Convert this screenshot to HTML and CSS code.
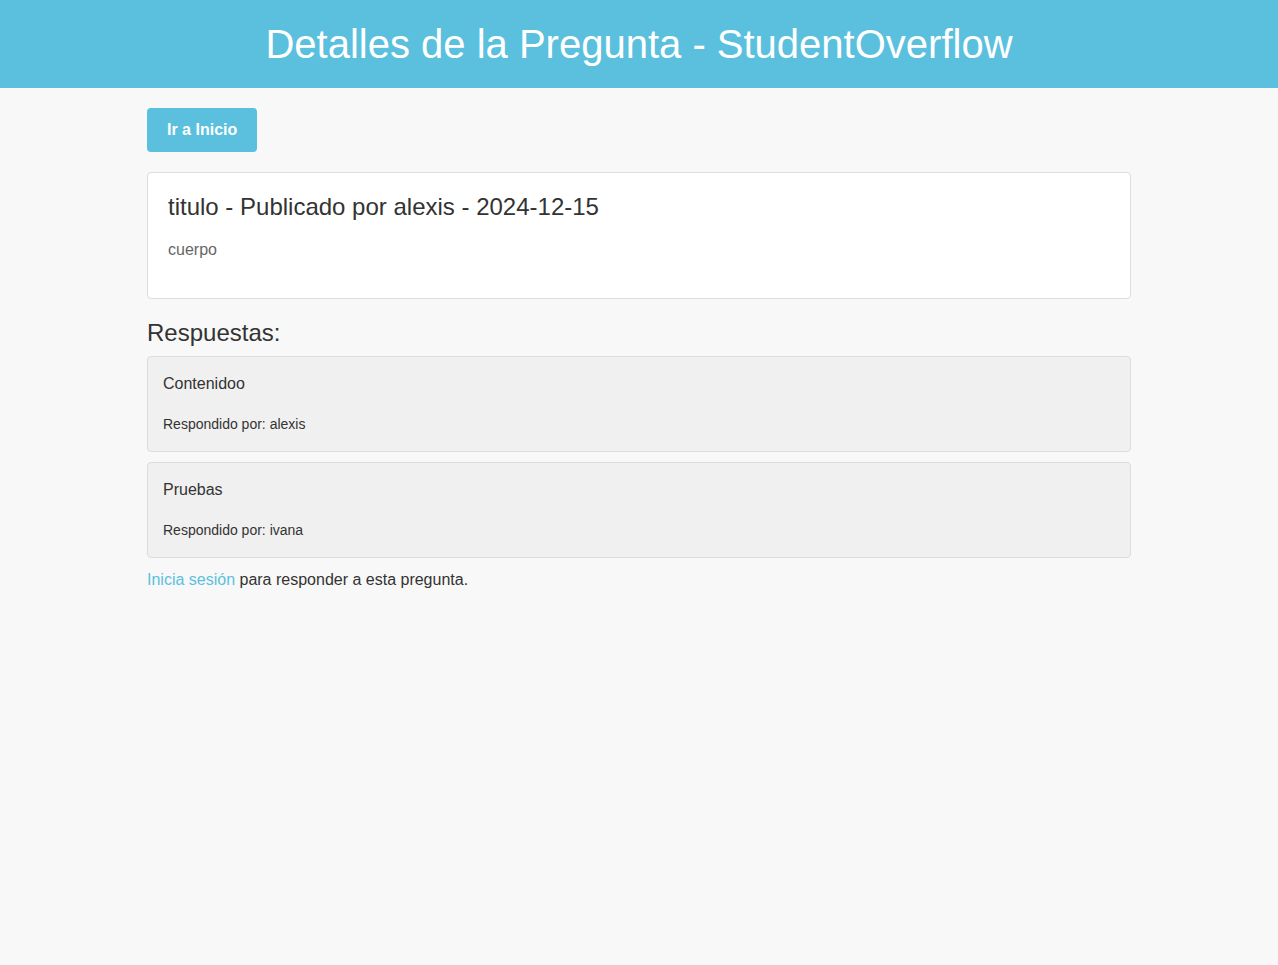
FILE: index.html
```html
<!DOCTYPE html>
<html lang="es">
<head>
<meta charset="utf-8">
<title>Detalles de la Pregunta - StudentOverflow</title>
<link rel="stylesheet" href="styles.css">
</head>
<body>
<header class="site-header">
  <h1 class="site-title">Detalles de la Pregunta - StudentOverflow</h1>
</header>
<main class="container">
  <a class="btn-info" href="#">Ir a Inicio</a>
  <section class="question-card">
    <h2 class="question-title">titulo - Publicado por alexis - 2024-12-15</h2>
    <p class="question-body">cuerpo</p>
  </section>
  <h3 class="answers-heading">Respuestas:</h3>
  <div class="answer">
    <p class="answer-text">Contenidoo</p>
    <p class="answer-meta">Respondido por: alexis</p>
  </div>
  <div class="answer">
    <p class="answer-text">Pruebas</p>
    <p class="answer-meta">Respondido por: ivana</p>
  </div>
  <p class="login-note"><a class="link" href="#">Inicia sesión</a> para responder a esta pregunta.</p>
</main>
</body>
</html>
```
FILE: styles.css
```css
* { box-sizing: border-box; }
html, body { margin: 0; padding: 0; }
body {
  background: #f7f8f7;
  font-family: "Liberation Sans", Arial, Helvetica, sans-serif;
  color: #333;
  font-size: 16px;
  line-height: 1.4;
}
.site-header {
  background: #5bc0de;
  height: 88px;
  display: flex;
  align-items: center;
  justify-content: center;
}
.site-title {
  margin: 0;
  color: #fff;
  font-weight: normal;
  font-size: 40px;
  line-height: 1;
}
.container {
  width: 984px;
  margin: 0 auto;
  padding-top: 20px;
  display: flex;
  flex-direction: column;
  align-items: flex-start;
}
.btn-info {
  display: inline-block;
  background: #5bc0de;
  color: #fff;
  font-weight: bold;
  text-decoration: none;
  padding: 12px 20px;
  line-height: 20px;
  border-radius: 4px;
  font-size: 16px;
}
.question-card {
  align-self: stretch;
  margin-top: 20px;
  background: #fff;
  border: 1px solid #ddd;
  border-radius: 4px;
  padding: 20px 20px 20px;
  height: 127px;
}
.question-title {
  margin: 0;
  font-size: 24px;
  font-weight: normal;
  line-height: 28px;
  color: #333;
}
.question-body {
  margin: 19px 0 0;
  color: #666;
  line-height: 20px;
}
.answers-heading {
  margin: 20px 0 9px;
  font-size: 24px;
  font-weight: normal;
  line-height: 28px;
}
.answer {
  align-self: stretch;
  background: #f0f0f0;
  border: 1px solid #ddd;
  border-radius: 4px;
  padding: 16px 15px 15px;
  height: 96px;
  margin-bottom: 10px;
}
.answer-text {
  margin: 0;
  line-height: 22px;
}
.answer-meta {
  margin: 19px 0 0;
  font-size: 14px;
  line-height: 20px;
}
.login-note {
  margin: 1px 0 0;
  line-height: 22px;
}
.link {
  color: #5bc0de;
  text-decoration: none;
}
```
